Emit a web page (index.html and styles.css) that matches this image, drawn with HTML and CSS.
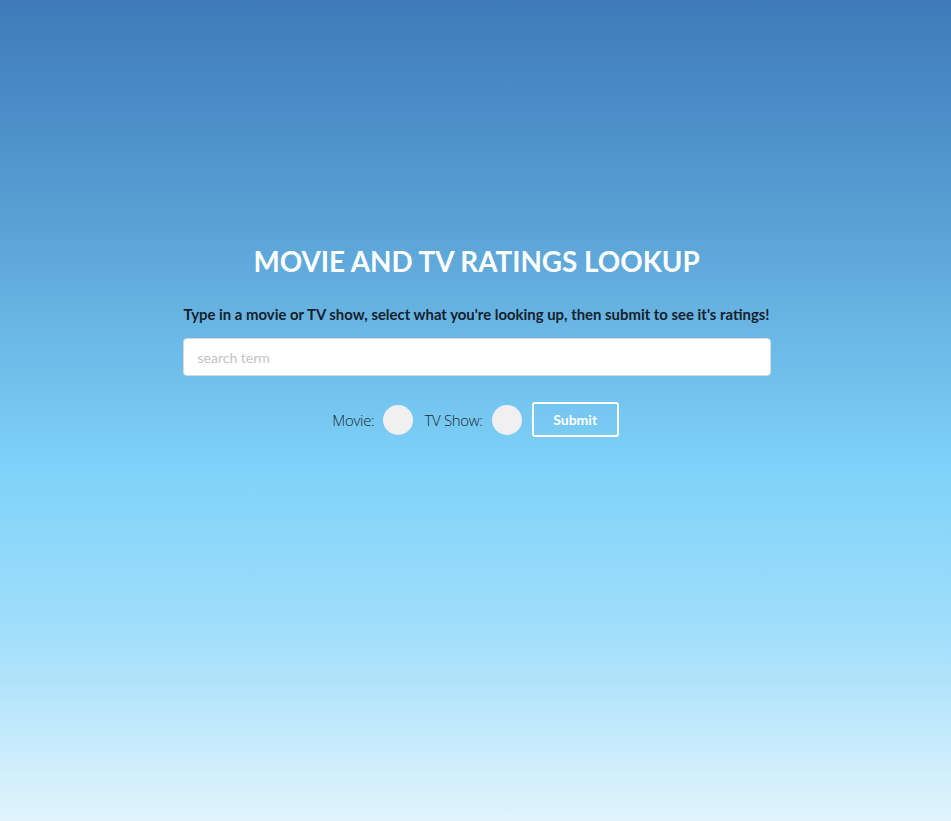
FILE: index.html
```html
<!DOCTYPE html>
<html lang="en">
<head>
<meta charset="utf-8">
<title>Movie and TV Ratings Lookup</title>
<link rel="stylesheet" href="styles.css">
</head>
<body>
<main class="wrap">
  <h1 class="title">MOVIE AND TV RATINGS LOOKUP</h1>
  <p class="intro">Type in a movie or TV show, select what you're looking up, then submit to see it's ratings!</p>
  <input class="search" type="text" placeholder="search term">
  <div class="controls">
    <label class="opt">Movie: <span class="radio"></span></label>
    <label class="opt">TV Show: <span class="radio"></span></label>
    <button class="submit" type="button">Submit</button>
  </div>
</main>
</body>
</html>
```
FILE: styles.css
```css
html, body {
  margin: 0;
  height: 100%;
}
body {
  background: linear-gradient(to bottom, #3e7ab9 0%, #5aa3d6 28%, #7ed2f9 57%, #a3dffa 78%, #e1f4fc 100%);
  font-family: Lato, "Open Sans", sans-serif;
  min-height: 821px;
}
.wrap {
  width: 588px;
  margin: 0 auto;
  padding-top: 244px;
  display: flex;
  flex-direction: column;
  align-items: center;
  position: relative;
  left: 1px;
}
.title {
  margin: 0;
  color: #fff;
  font-size: 27.8px;
  font-weight: 700;
  line-height: 36px;
}
.intro {
  margin: 24px 0 0;
  color: #16212b;
  font-size: 14.9px;
  font-weight: 700;
  line-height: 20px;
  white-space: nowrap;
}
.search {
  margin-top: 14px;
  box-sizing: border-box;
  width: 588px;
  height: 38px;
  border: 1px solid #d9d9d9;
  border-radius: 4px;
  background: #fff;
  padding: 0 14px;
  font-family: Lato, sans-serif;
  font-size: 14px;
  color: #333;
  outline: none;
}
.search::placeholder {
  color: #c4c4c4;
}
.controls {
  margin-top: 26px;
  margin-right: 2px;
  display: flex;
  align-items: center;
  gap: 11px;
}
.opt {
  display: flex;
  align-items: center;
  gap: 9px;
  font-family: "Open Sans", Lato, sans-serif;
  font-weight: 300;
  font-size: 15px;
  color: #1c2a38;
  letter-spacing: -0.3px;
}
.radio {
  width: 30px;
  height: 30px;
  border-radius: 50%;
  background: #f0f0f0;
  display: block;
}
.submit {
  box-sizing: border-box;
  width: 87px;
  height: 35px;
  margin-left: -1px;
  border: 2px solid #fff;
  border-radius: 3px;
  background: transparent;
  color: #fff;
  font-family: Lato, sans-serif;
  font-weight: 700;
  font-size: 14px;
  padding: 0;
}
```
